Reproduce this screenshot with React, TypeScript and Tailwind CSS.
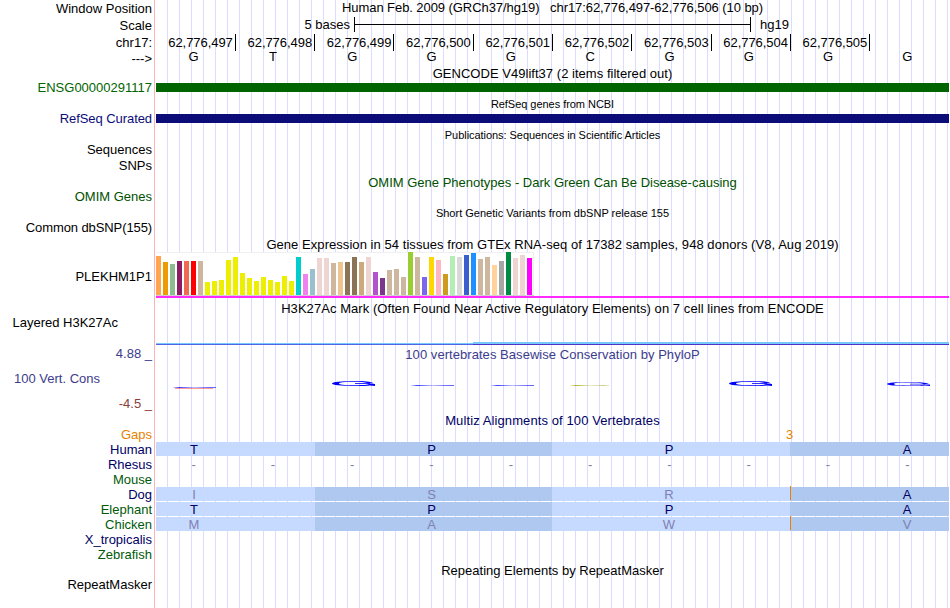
import clsx from 'clsx';

const labels = [
    { text: 'Window Position', className: 'mt-px' },
    { text: 'Scale', className: 'mt-[2px]' },
    { text: 'chr17:', className: 'mt-[2px]' },
    { text: '--->', className: 'mt-px' },
    { text: 'ENSG00000291117', className: 'mt-[14px] text-[#006400]' },
    { text: 'RefSeq Curated', className: 'mt-4 tracking-[-0.07px] text-[#0c0c78]' },
    { text: 'Sequences', className: 'mt-4' },
    { text: 'SNPs', className: 'mt-px' },
    { text: 'OMIM Genes', className: 'mt-4 text-[#005000]' },
    { text: 'Common dbSNP(155)', className: 'mt-4 tracking-[-0.1px]' },
    { text: 'PLEKHM1P1', className: 'mt-[34px]' },
    { text: 'Layered H3K27Ac', className: 'mt-[31px] pr-[34px]' },
    { text: '4.88 _', className: 'mt-4 text-[#3c3c8c]' },
    { text: '100 Vert. Cons', className: 'mt-[10px] pr-[52px] text-[#3c3c8c]' },
    { text: '-4.5 _', className: 'mt-[10px] text-[#8c3c3c]' },
    { text: 'Gaps', className: 'mt-4 text-[#e68200]' },
    { text: 'Human', className: 'text-[#000064]' },
    { text: 'Rhesus', className: 'text-[#000064]' },
    { text: 'Mouse', className: 'text-[#005a0a]' },
    { text: 'Dog', className: 'text-[#000064]' },
    { text: 'Elephant', className: 'text-[#005a0a]' },
    { text: 'Chicken', className: 'text-[#005a0a]' },
    { text: 'X_tropicalis', className: 'text-[#000064]' },
    { text: 'Zebrafish', className: 'text-[#005a0a]' },
    { text: 'RepeatMasker', className: 'mt-[15px]' },
];

const positions = ['62,776,497', '62,776,498', '62,776,499', '62,776,500', '62,776,501', '62,776,502', '62,776,503', '62,776,504', '62,776,505'];

const bases = ['G', 'T', 'G', 'G', 'G', 'C', 'G', 'G', 'G', 'G'];

// one [height, color] pair per GTEx tissue
const tissues: [number, string][] = [
    [39, '#ffa54f'], [33, '#ee9a00'], [31, '#8fbc8f'], [34, '#8b1c62'], [34, '#ee6a50'], [34, '#ff0000'],
    [34, '#cdb79e'], [13, '#eeee00'], [14, '#eeee00'], [15, '#eeee00'], [35, '#eeee00'], [38, '#eeee00'],
    [22, '#eeee00'], [17, '#eeee00'], [14, '#eeee00'], [18, '#eeee00'], [15, '#eeee00'], [13, '#eeee00'],
    [19, '#eeee00'], [14, '#eeee00'], [38, '#00cdcd'], [21, '#ee82ee'], [26, '#9ac0cd'], [37, '#eed5d2'],
    [37, '#eed5d2'], [32, '#cdb79e'], [33, '#eec591'], [33, '#8b7355'], [38, '#8b7355'], [33, '#cdaa7d'],
    [38, '#eed5d2'], [23, '#b452cd'], [17, '#7a378b'], [25, '#cdb79e'], [26, '#cdb79e'], [18, '#cdb79e'],
    [43, '#9acd32'], [38, '#cdb79e'], [18, '#7a67ee'], [38, '#ffd700'], [35, '#ffb6c1'], [21, '#cd9b1d'],
    [39, '#b4eeb4'], [38, '#d9d9d9'], [40, '#3a5fcd'], [42, '#1e90ff'], [36, '#cdb79e'], [38, '#cdb79e'],
    [30, '#ffd39b'], [34, '#a6a6a6'], [43, '#008b45'], [37, '#eed5d2'], [40, '#eed5d2'], [37, '#ff00ff'],
];

const Title = ({ text, className }: { text: string; className?: string }) => (
    <div className={clsx('h-[15px] whitespace-pre text-center leading-[15px]', className)}>{text}</div>
);

const Codons = ({ letters, faded, gap, className }: { letters: string[]; faded: boolean[]; gap?: boolean; className?: string }) => (
    <div className={clsx('relative grid h-[14px] grid-cols-[159px_237px_238px_159px] leading-[15px]', className)}>
        {letters.map((letter, i) => (
            <div
                key={i}
                className={clsx(
                    'h-[14px] text-center',
                    i % 2 ? 'bg-[#aec8f0]' : 'bg-[#c6daff]',
                    faded[i] ? 'text-[#8080b4]' : 'text-[#000064]',
                    i === 0 && 'pr-[83px]',
                    (i === 1 || i === 2) && 'pr-[4px]',
                    i === 3 && 'pl-[75px]'
                )}
            >
                {letter}
            </div>
        ))}
        {gap && <div className="absolute -top-px left-[634px] h-[14px] w-px bg-[#e68200]" />}
    </div>
);

// flattened conservation letter
const FlatG = ({ x, y, h }: { x: number; y: number; h: number }) => (
    <svg x={x} y={y} width="43" height={h} viewBox="0 0 43 5" preserveAspectRatio="none">
        <path
            d="M42 2.4 C39 .6 32 0 23 0 C9 0 0 1 0 2.5 C0 4 9 5 23 5 C30 5 35 4.8 38 4.4 L43 5 V3.1 H37 C36 3.9 31 4.3 23 4.3 C12 4.3 7 3.7 7 2.5 C7 1.3 12 .7 23 .7 C30 .7 34 1.2 36 2.4 Z"
            fill="#0000ff"
        />
        <rect x="23" y="2.2" width="15" height=".8" fill="#0000ff" />
    </svg>
);

const Conservation = () => (
    <svg className="mt-[15px] block h-[14px] w-full" viewBox="0 0 793 14">
        <defs>
            <linearGradient id="thin">
                <stop offset="0" stopColor="#0000ff" stopOpacity="0.1" />
                <stop offset="0.14" stopColor="#0000ff" stopOpacity="0.75" />
                <stop offset="0.5" stopColor="#0000ff" stopOpacity="0.25" />
                <stop offset="0.8" stopColor="#0000ff" stopOpacity="0.55" />
                <stop offset="1" stopColor="#0000ff" stopOpacity="0.6" />
            </linearGradient>
            <linearGradient id="olive">
                <stop offset="0" stopColor="#a0a000" stopOpacity="0.1" />
                <stop offset="0.14" stopColor="#a0a000" stopOpacity="0.8" />
                <stop offset="0.5" stopColor="#a0a000" stopOpacity="0.2" />
                <stop offset="0.85" stopColor="#a0a000" stopOpacity="0.5" />
                <stop offset="1" stopColor="#a0a000" stopOpacity="0.1" />
            </linearGradient>
        </defs>
        <rect x="17" y="10" width="43" height="1" fill="url(#thin)" />
        <rect x="19" y="11" width="38" height="1" fill="#ff0000" opacity="0.4" />
        <FlatG x={176} y={4} h={5} />
        <rect x="255" y="8" width="43" height="1" fill="url(#thin)" />
        <rect x="335" y="8" width="43" height="1" fill="url(#thin)" />
        <rect x="414" y="8" width="40" height="1" fill="url(#olive)" />
        <FlatG x={573} y={4} h={5} />
        <FlatG x={731} y={5} h={4} />
    </svg>
);

const App = () => {
    return (
        <div className="flex h-[608px] w-[950px] overflow-hidden bg-white font-['Liberation_Sans',Arial,sans-serif] text-[13px] text-black">
            <div className="w-[155px] shrink-0 border-r border-[#ffb4b4] pr-[2px]">
                {labels.map(({ text, className }) => (
                    <div key={text} className={clsx('h-[15px] whitespace-nowrap text-right leading-[15px]', className)}>
                        {text}
                    </div>
                ))}
            </div>
            <div className="ml-px w-[793px] shrink-0 bg-[repeating-linear-gradient(to_right,transparent_0,transparent_11px,#dcdcff_11px,#dcdcff_12px)]">
                <Title text="Human Feb. 2009 (GRCh37/hg19)   chr17:62,776,497-62,776,506 (10 bp)" className="tracking-[-0.07px]" />
                <div className="mt-[2px] flex h-[15px] leading-[15px]">
                    <div className="w-[198px] pr-[4px] text-right">5 bases</div>
                    <div className="flex w-[397px] items-center border-x border-black">
                        <div className="h-px w-full bg-black" />
                    </div>
                    <div className="pl-[9px]">hg19</div>
                </div>
                <div className="-ml-[0.5px] mr-[0.5px] mt-[2px] grid h-[15px] grid-cols-10 leading-[17px]">
                    {positions.map((position) => (
                        <div key={position} className="-mr-px border-r border-black pr-[2px] text-right tracking-[-0.05px]">
                            {position}
                        </div>
                    ))}
                </div>
                <div className="grid h-[15px] grid-cols-10 leading-[15px]">
                    {bases.map((base, i) => (
                        <div key={i} className="pr-[4px] text-center">
                            {base}
                        </div>
                    ))}
                </div>
                <Title text="GENCODE V49lift37 (2 items filtered out)" className="mt-[2px] tracking-[0.03px]" />
                <div className="mt-[2px] h-[9px] bg-[#006400]" />
                <Title text="RefSeq genes from NCBI" className="mt-[5px] text-[11px] tracking-[-0.04px]" />
                <div className="mt-[2px] h-[9px] bg-[#0c0c78]" />
                <Title text="Publications: Sequences in Scientific Articles" className="mt-[5px] text-[11px] tracking-[-0.05px]" />
                <Title text="OMIM Gene Phenotypes - Dark Green Can Be Disease-causing" className="mt-8 text-[#005000]" />
                <Title text="Short Genetic Variants from dbSNP release 155" className="mt-4 text-[11px]" />
                <Title text="Gene Expression in 54 tissues from GTEx RNA-seq of 17382 samples, 948 donors (V8, Aug 2019)" className="mt-4 tracking-[0.055px]" />
                <div className="flex h-[43px] w-[378px] items-end gap-[2px] bg-white shadow-[inset_0_1px_#f0f0f0,inset_-1px_0_#f0f0f0]">
                    {tissues.map(([height, color], i) => (
                        <div key={i} className="w-[5px] shrink-0" style={{ height, backgroundColor: color }} />
                    ))}
                </div>
                <div className="h-px w-[378px] bg-[#d0d0d0]" />
                <div className="h-[2px] bg-[#ff28ff]" />
                <Title text="H3K27Ac Mark (Often Found Near Active Regulatory Elements) on 7 cell lines from ENCODE" className="mt-[3px] tracking-[0.06px]" />
                <div className="mt-[26px] flex h-[3px] items-end">
                    <div className="h-[2px] w-[317px] border-b border-[#5064e6] bg-[#78c8ff]" />
                    <div className="h-[3px] flex-1 border-b border-[#5032c8] bg-[#78c8fa]" />
                </div>
                <Title text="100 vertebrates Basewise Conservation by PhyloP" className="mt-[2px] tracking-[0.05px] text-[#3c3c8c]" />
                <Conservation />
                <Title text="Multiz Alignments of 100 Vertebrates" className="mt-[22px] tracking-[0.1px] text-[#000064]" />
                <div className="h-[14px] pl-[630px] leading-[14px] text-[#e68200]">3</div>
                <Codons letters={['T', 'P', 'P', 'A']} faded={[false, false, false, false]} />
                <div className="mt-px grid h-[14px] grid-cols-10 leading-[15px] text-[#8080a0]">
                    {bases.map((_, i) => (
                        <div key={i} className="pr-[4px] text-center">
                            -
                        </div>
                    ))}
                </div>
                <Codons letters={['I', 'S', 'R', 'A']} faded={[true, true, true, false]} gap className="mt-4" />
                <Codons letters={['T', 'P', 'P', 'A']} faded={[false, false, false, false]} className="mt-px" />
                <Codons letters={['M', 'A', 'W', 'V']} faded={[true, true, true, true]} gap className="mt-px" />
                <Title text="Repeating Elements by RepeatMasker" className="mt-8" />
                <div className="h-[30px]" />
            </div>
        </div>
    );
};

export default App;
